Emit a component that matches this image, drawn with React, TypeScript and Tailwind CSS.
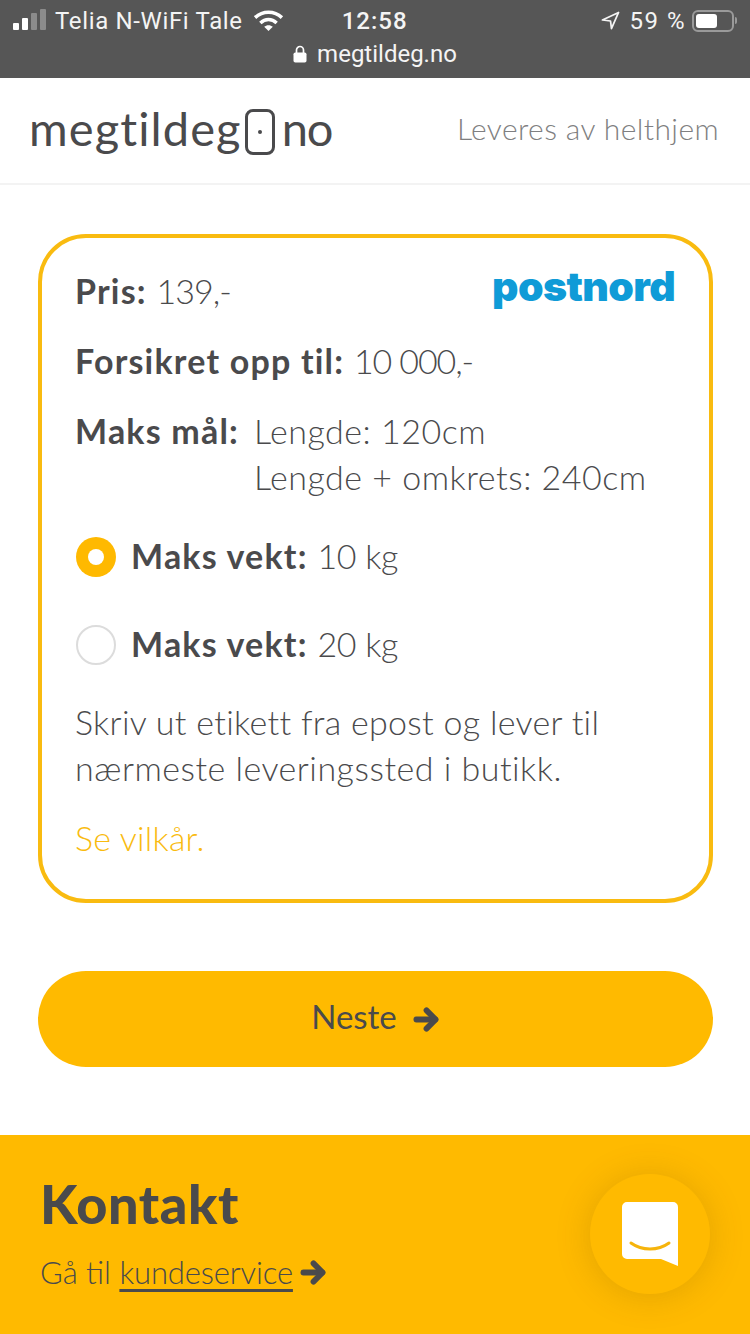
import React from "react";

const Arrow = ({ className }: { className?: string }) => (
  <svg viewBox="0 0 28 26" className={className} fill="none" stroke="#4a4a4c" strokeWidth="6" strokeLinecap="round" strokeLinejoin="round">
    <path d="M3.5 13H23" />
    <path d="M14 3.5L23.5 13L14 22.5" />
  </svg>
);

function StatusBar() {
  return (
    <div className="h-[78px] bg-[#565656] text-[#f4f4f4] flex flex-col font-['Roboto',sans-serif]">
      <div className="h-[41px] flex items-center relative">
        <div className="flex items-end gap-[3px] ml-[13px] h-[21px] mt-[-2px]">
          <div className="w-[6px] h-[7px] rounded-[1px] bg-white" />
          <div className="w-[6px] h-[12px] rounded-[1px] bg-white" />
          <div className="w-[6px] h-[17px] rounded-[1px] bg-[#8b8b8b]" />
          <div className="w-[6px] h-[21px] rounded-[1px] bg-[#8b8b8b]" />
        </div>
        <span className="ml-[9px] text-[24px] leading-none tracking-[0.65px]">Telia N-WiFi Tale</span>
        <svg viewBox="0 0 32 24" className="w-[31px] h-[23px] ml-[10px]" fill="none" stroke="#fff" strokeWidth="3.6" strokeLinecap="butt">
          <path d="M2 9C10 1.5 22 1.5 30 9" />
          <path d="M7.5 14.5C12.5 9.8 19.5 9.8 24.5 14.5" />
          <path d="M16 23L11.5 18.5C14 16.3 18 16.3 20.5 18.5Z" fill="#fff" stroke="none" />
        </svg>
        <span className="ml-[58px] text-[24px] leading-none font-medium tracking-[1px]">12:58</span>
        <svg viewBox="0 0 20 20" className="w-[19px] h-[19px] ml-auto" fill="none" stroke="#f4f4f4" strokeWidth="1.8" strokeLinejoin="round">
          <path d="M18.5 1.5L1.5 9.5L10 10.5L11 18.5Z" />
        </svg>
        <span className="ml-[9px] text-[24px] leading-none tracking-[1.5px]">59 %</span>
        <div className="ml-[6px] mr-[13px] flex items-center">
          <div className="w-[42px] h-[22px] rounded-[6px] border-2 border-[#9a9a9a] p-[2px]">
            <div className="w-[21px] h-full rounded-[3px] bg-white" />
          </div>
          <div className="w-[2px] h-[7px] ml-[1px] bg-[#9a9a9a] rounded-r-sm" />
        </div>
      </div>
      <div className="flex-1 flex items-center justify-center gap-[10px] pb-[11px]">
        <svg viewBox="0 0 14 18" className="w-[14px] h-[18px]" fill="none">
          <path d="M3.5 8V5a3.5 3.5 0 0 1 7 0v3" stroke="#fff" strokeWidth="1.7" />
          <rect x="0.5" y="7.5" width="13" height="10" rx="1.8" fill="#fff" />
        </svg>
        <span className="text-[24px] leading-none">megtildeg.no</span>
      </div>
    </div>
  );
}

function Header() {
  return (
    <div className="h-[107px] bg-white border-b-2 border-[#f3f3f3] flex items-center justify-between pl-[29px] pr-[31px]">
      <div className="flex items-center text-[#4a4a4c] text-[47px] leading-none font-['Lato',sans-serif] font-normal mt-[-4px]">
        <span className="tracking-[1.1px]">megtildeg</span>
        <div className="w-[30px] h-[46px] ml-[3px] mr-[7px] rounded-[8px] border-[3px] border-[#4a4a4c] flex items-center justify-center mt-[6px]">
          <div className="w-[4px] h-[4px] rounded-full bg-[#4a4a4c]" />
        </div>
        <span className="tracking-[-1px]">no</span>
      </div>
      <span className="text-[#7f7f81] text-[30px] tracking-[0.4px] font-light leading-none font-['Lato',sans-serif] mt-[-5px]">Leveres av helthjem</span>
    </div>
  );
}

function Option({ checked, label }: { checked?: boolean; label: string }) {
  return (
    <div className="flex items-center gap-[15px] h-[40px] ml-[1px]">
      {checked ? (
        <div className="w-[40px] h-[40px] rounded-full bg-[#ffb900] flex items-center justify-center">
          <div className="w-[16px] h-[16px] rounded-full bg-white" />
        </div>
      ) : (
        <div className="w-[40px] h-[40px] rounded-full border-2 border-[#dcdcdc]" />
      )}
      <span className="mt-[-2px]"><b className="font-bold tracking-[1.2px]">Maks vekt:</b> <span className="tracking-[-0.3px]">{label}</span></span>
    </div>
  );
}

function Card() {
  return (
    <div className="border-4 border-[#f9bb10] rounded-[48px] px-[33px] pt-[30px] pb-[38px] text-[#4a4a4c] text-[34px] tracking-[0.5px] leading-[46px] font-light">
      <div className="flex items-start justify-between h-[46px]">
        <span><b className="font-bold tracking-[1.2px]">Pris:</b> <span className="tracking-[-1px]">139,-</span></span>
        <span className="text-[#0f9bd7] text-[41px] leading-[36px] font-black tracking-[-0.6px] font-['Inter',sans-serif] mr-[1px] mt-[0px]">postnord</span>
      </div>
      <div className="mt-[24px]"><b className="font-bold tracking-[1.2px]">Forsikret opp til:</b> <span className="tracking-[-1.1px]">10 000,-</span></div>
      <div className="mt-[24px] flex">
        <b className="font-bold tracking-[1.2px] w-[179px] shrink-0">Maks mål:</b>
        <div>
          <div>Lengde: 120cm</div>
          <div>Lengde + omkrets: 240cm</div>
        </div>
      </div>
      <div className="mt-[37px] flex flex-col gap-[48px]">
        <Option checked label="10 kg" />
        <Option label="20 kg" />
      </div>
      <p className="mt-[34px]"><span className="tracking-[0.3px]">Skriv ut etikett fra epost og lever til</span><br />nærmeste leveringssted i butikk.</p>
      <p className="mt-[24px] text-[#f9bb10] tracking-[0.2px]">Se vilkår.</p>
    </div>
  );
}

export default function App() {
  return (
    <div className="w-[750px] h-[1334px] overflow-hidden relative bg-white font-['Lato',sans-serif]">
      <StatusBar />
      <Header />
      <div className="pl-[38px] pr-[37px] pt-[49px]">
        <Card />
        <button className="mt-[68px] w-full h-[96px] rounded-full bg-[#ffba00] flex items-center justify-center gap-[16px] text-[#4a4a4c] text-[33px]">
          <span className="mt-[-4px]">Neste</span>
          <Arrow className="w-[27px] h-[25px]" />
        </button>
      </div>
      <div className="mt-[68px] h-[199px] bg-[#ffba00] pl-[40px] pt-[36px] text-[#4a4a4c]">
        <h2 className="text-[54px] leading-[66px] font-black tracking-[0.6px]">Kontakt</h2>
        <div className="mt-[15px] flex items-center text-[31px] leading-[40px] font-light">
          <span>Gå til <span className="underline underline-offset-[5px] tracking-[-0.15px]">kundeservice</span></span>
          <Arrow className="w-[27px] h-[25px] ml-[7px]" />
        </div>
      </div>
      <div className="absolute left-[590px] top-[1174px] w-[120px] h-[120px] rounded-full bg-[#ffba00] shadow-[0_2px_34px_rgba(120,80,0,0.22)] flex items-center justify-center">
        <svg viewBox="0 0 56 64" className="w-[56px] h-[64px]">
          <path d="M5 0H51a5 5 0 0 1 5 5V64L39 57H5a5 5 0 0 1-5-5V5a5 5 0 0 1 5-5Z" fill="#fff" />
          <path d="M9 41C20 49 36 49 47 41" fill="none" stroke="#f6b40c" strokeWidth="3" strokeLinecap="round" />
        </svg>
      </div>
    </div>
  );
}
